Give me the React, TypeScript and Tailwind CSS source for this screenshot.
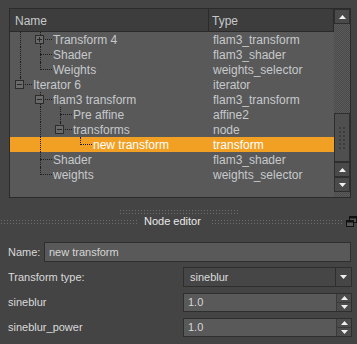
import React from "react";

type Guide = "none" | "cont";
type Row = {
  label: string;
  type: string;
  level: number;
  guides: Guide[];
  own: "mid" | "last";
  box?: "+" | "-";
  selected?: boolean;
};

const rows: Row[] = [
  { label: "Transform 4", type: "flam3_transform", level: 1, guides: ["cont"], own: "mid", box: "+" },
  { label: "Shader", type: "flam3_shader", level: 1, guides: ["cont"], own: "mid" },
  { label: "Weights", type: "weights_selector", level: 1, guides: ["cont"], own: "last" },
  { label: "Iterator 6", type: "iterator", level: 0, guides: [], own: "last", box: "-" },
  { label: "flam3 transform", type: "flam3_transform", level: 1, guides: ["none"], own: "mid", box: "-" },
  { label: "Pre affine", type: "affine2", level: 2, guides: ["none", "cont"], own: "mid" },
  { label: "transforms", type: "node", level: 2, guides: ["none", "cont"], own: "last", box: "-" },
  { label: "new transform", type: "transform", level: 3, guides: ["none", "cont", "none"], own: "last", selected: true },
  { label: "Shader", type: "flam3_shader", level: 1, guides: ["none"], own: "mid" },
  { label: "weights", type: "weights_selector", level: 1, guides: ["none"], own: "last" },
];

function ExpBox({ sign }: { sign: "+" | "-" }) {
  return (
    <div className="absolute left-[5px] top-[3px] w-[9px] h-[9px] border border-[#2c2c2c] bg-[#6a6a6a] z-10">
      <div className="absolute left-[1px] top-[3px] w-[5px] h-[1px] bg-[#2a2a2a]" />
      {sign === "+" && <div className="absolute left-[3px] top-[1px] w-[1px] h-[5px] bg-[#2a2a2a]" />}
    </div>
  );
}

function Cell({ kind }: { kind: Guide | "mid" | "last" }) {
  return (
    <div className="relative w-[20px] h-full shrink-0">
      {kind === "cont" && <div className="absolute left-[10px] top-0 h-full border-l border-dotted border-[#1c1c1c]" />}
      {kind === "mid" && <div className="absolute left-[10px] top-0 h-full border-l border-dotted border-[#1c1c1c]" />}
      {kind === "last" && <div className="absolute left-[10px] top-0 h-[8px] border-l border-dotted border-[#1c1c1c]" />}
      {(kind === "mid" || kind === "last") && (
        <div className="absolute left-[10px] top-[7px] w-[12px] border-t border-dotted border-[#1c1c1c]" />
      )}
    </div>
  );
}

function TreeRow({ r }: { r: Row }) {
  return (
    <div className={`flex h-[15px] items-center ${r.selected ? "bg-[#f2a024] text-white" : "text-[#c6c9cc]"}`}>
      <div className="flex w-[199px] h-full shrink-0 items-center">
        {r.guides.map((g, i) => (
          <Cell key={i} kind={g} />
        ))}
        <div className="relative w-[20px] h-full shrink-0">
          <Cell kind={r.own} />
          {r.box && <ExpBox sign={r.box} />}
        </div>
        <span className="ml-[3px] pt-[2px] leading-[13px] whitespace-nowrap">{r.label}</span>
      </div>
      <span className="pl-[4px] pt-[2px] leading-[13px] whitespace-nowrap">{r.type}</span>
    </div>
  );
}

function UpArrow({ className = "" }: { className?: string }) {
  return (
    <svg width="7" height="4" viewBox="0 0 7 4" className={className}>
      <polygon points="0,4 7,4 3.5,0" fill="#f0f0f0" />
    </svg>
  );
}
function DownArrow({ className = "" }: { className?: string }) {
  return (
    <svg width="7" height="4" viewBox="0 0 7 4" className={className}>
      <polygon points="0,0 7,0 3.5,4" fill="#f0f0f0" />
    </svg>
  );
}

function SbButton({ dir }: { dir: "up" | "down" }) {
  return (
    <div className="h-[15px] w-full flex items-center justify-center bg-[#4a4a4a] border border-[#2e2e2e] shrink-0">
      {dir === "up" ? <UpArrow /> : <DownArrow />}
    </div>
  );
}

function Scrollbar() {
  return (
    <div className="w-[16px] h-full flex flex-col bg-[repeating-conic-gradient(#5a5a5a_0_25%,#4b4b4b_0_50%)] bg-[length:2px_2px] shrink-0">
      <SbButton dir="up" />
      <div className="h-[89px] shrink-0" />
      <div className="h-[49px] shrink-0 bg-[#4f4f4f] border border-[#2e2e2e] flex items-center justify-center">
        <svg width="6" height="22" viewBox="0 0 6 22">
          {[0, 1, 2, 3, 4, 5].map((y) =>
            [0, 1].map((x) => <rect key={`${x}-${y}`} x={x * 4} y={y * 4} width="2" height="2" fill="#3c3c3c" />)
          )}
        </svg>
      </div>
      <SbButton dir="up" />
      <SbButton dir="down" />
    </div>
  );
}

function Grip({ className = "" }: { className?: string }) {
  return (
    <div
      className={`h-[5px] bg-[radial-gradient(circle,#6e6e6e_0.9px,transparent_1px)] bg-[length:3px_3px] ${className}`}
    />
  );
}

function SpinBox({ value }: { value: string }) {
  return (
    <div className="flex h-[19px] border border-[#2e2e2e] bg-[#595959]">
      <div className="flex-1 pl-[4px] flex items-center text-[#d6d6d6]">{value}</div>
      <div className="w-[15px] flex flex-col border-l border-[#3a3a3a] bg-[#4c4c4c]">
        <div className="flex-1 flex items-center justify-center border-b border-[#3a3a3a]">
          <UpArrow />
        </div>
        <div className="flex-1 flex items-center justify-center">
          <DownArrow />
        </div>
      </div>
    </div>
  );
}

export default function App() {
  return (
    <div className="w-[357px] h-[344px] bg-[#444444] overflow-hidden flex flex-col font-['Liberation_Sans',Arial,sans-serif]">
      {/* Tree panel */}
      <div className="mt-[8px] ml-[9px] w-[342px] h-[190px] border border-[#2b2b2b] bg-[#595959] flex text-[12px]">
        <div className="flex-1 flex flex-col min-w-0">
          <div className="h-[23px] flex shrink-0 bg-[#3d3d3d] border-b border-[#2a2a2a] text-[#c6c9cc] text-[12px]">
            <div className="w-[199px] h-full pl-[5px] pt-[2px] flex items-center border-r border-[#2a2a2a]">Name</div>
            <div className="flex-1 h-full pl-[3px] pt-[2px] flex items-center border-r border-[#2a2a2a]">Type</div>
          </div>
          <div className="flex flex-col">
            {rows.map((r, i) => (
              <TreeRow key={i} r={r} />
            ))}
          </div>
        </div>
        <Scrollbar />
      </div>

      {/* Splitter */}
      <div className="h-[16px] flex items-start pt-[11px] shrink-0">
        <Grip className="ml-[119px] w-[120px] h-[3px]" />
      </div>

      {/* Dock title */}
      <div className="h-[14px] flex items-center shrink-0 text-[11px]">
        <Grip className="w-[141px] h-[4px]" />
        <span className="ml-[7px] text-[#eaeaea] whitespace-nowrap">Node editor</span>
        <Grip className="ml-[10px] w-[137px] h-[4px]" />
        <div className="ml-[2px] w-[11px] h-[11px] flex items-center justify-center">
          <svg width="11" height="11" viewBox="0 0 11 11">
            <rect x="3.5" y="0.5" width="7" height="6" fill="#555" stroke="#111" />
            <rect x="3.5" y="0.5" width="7" height="2" fill="#111" />
            <rect x="0.5" y="4.5" width="7" height="6" fill="#555" stroke="#111" />
            <rect x="0.5" y="4.5" width="7" height="2" fill="#111" />
          </svg>
        </div>
      </div>

      {/* Form */}
      <div className="mt-[14px] flex flex-col text-[11px] text-[#dadada]">
        <div className="flex items-center h-[20px] pl-[8px] pr-[6px]">
          <span className="w-[36px]">Name:</span>
          <div className="flex-1 h-[20px] border border-[#2e2e2e] bg-[#595959] pl-[4px] flex items-center text-[#d6d6d6]">
            new transform
          </div>
        </div>
        <div className="flex items-center h-[20px] mt-[5px] pl-[8px] pr-[5px]">
          <span className="w-[175px]">Transform type:</span>
          <div className="flex-1 h-[20px] flex border border-[#2e2e2e] bg-[#464646]">
            <div className="flex-1 pl-[6px] flex items-center text-[#dcdcdc]">sineblur</div>
            <div className="w-[16px] flex items-center justify-center border-l border-[#2e2e2e]">
              <DownArrow />
            </div>
          </div>
        </div>
        <div className="flex items-center h-[19px] mt-[6px] pl-[8px] pr-[5px]">
          <span className="w-[175px]">sineblur</span>
          <div className="flex-1">
            <SpinBox value="1.0" />
          </div>
        </div>
        <div className="flex items-center h-[19px] mt-[6px] pl-[8px] pr-[5px]">
          <span className="w-[175px]">sineblur_power</span>
          <div className="flex-1">
            <SpinBox value="1.0" />
          </div>
        </div>
      </div>
    </div>
  );
}
